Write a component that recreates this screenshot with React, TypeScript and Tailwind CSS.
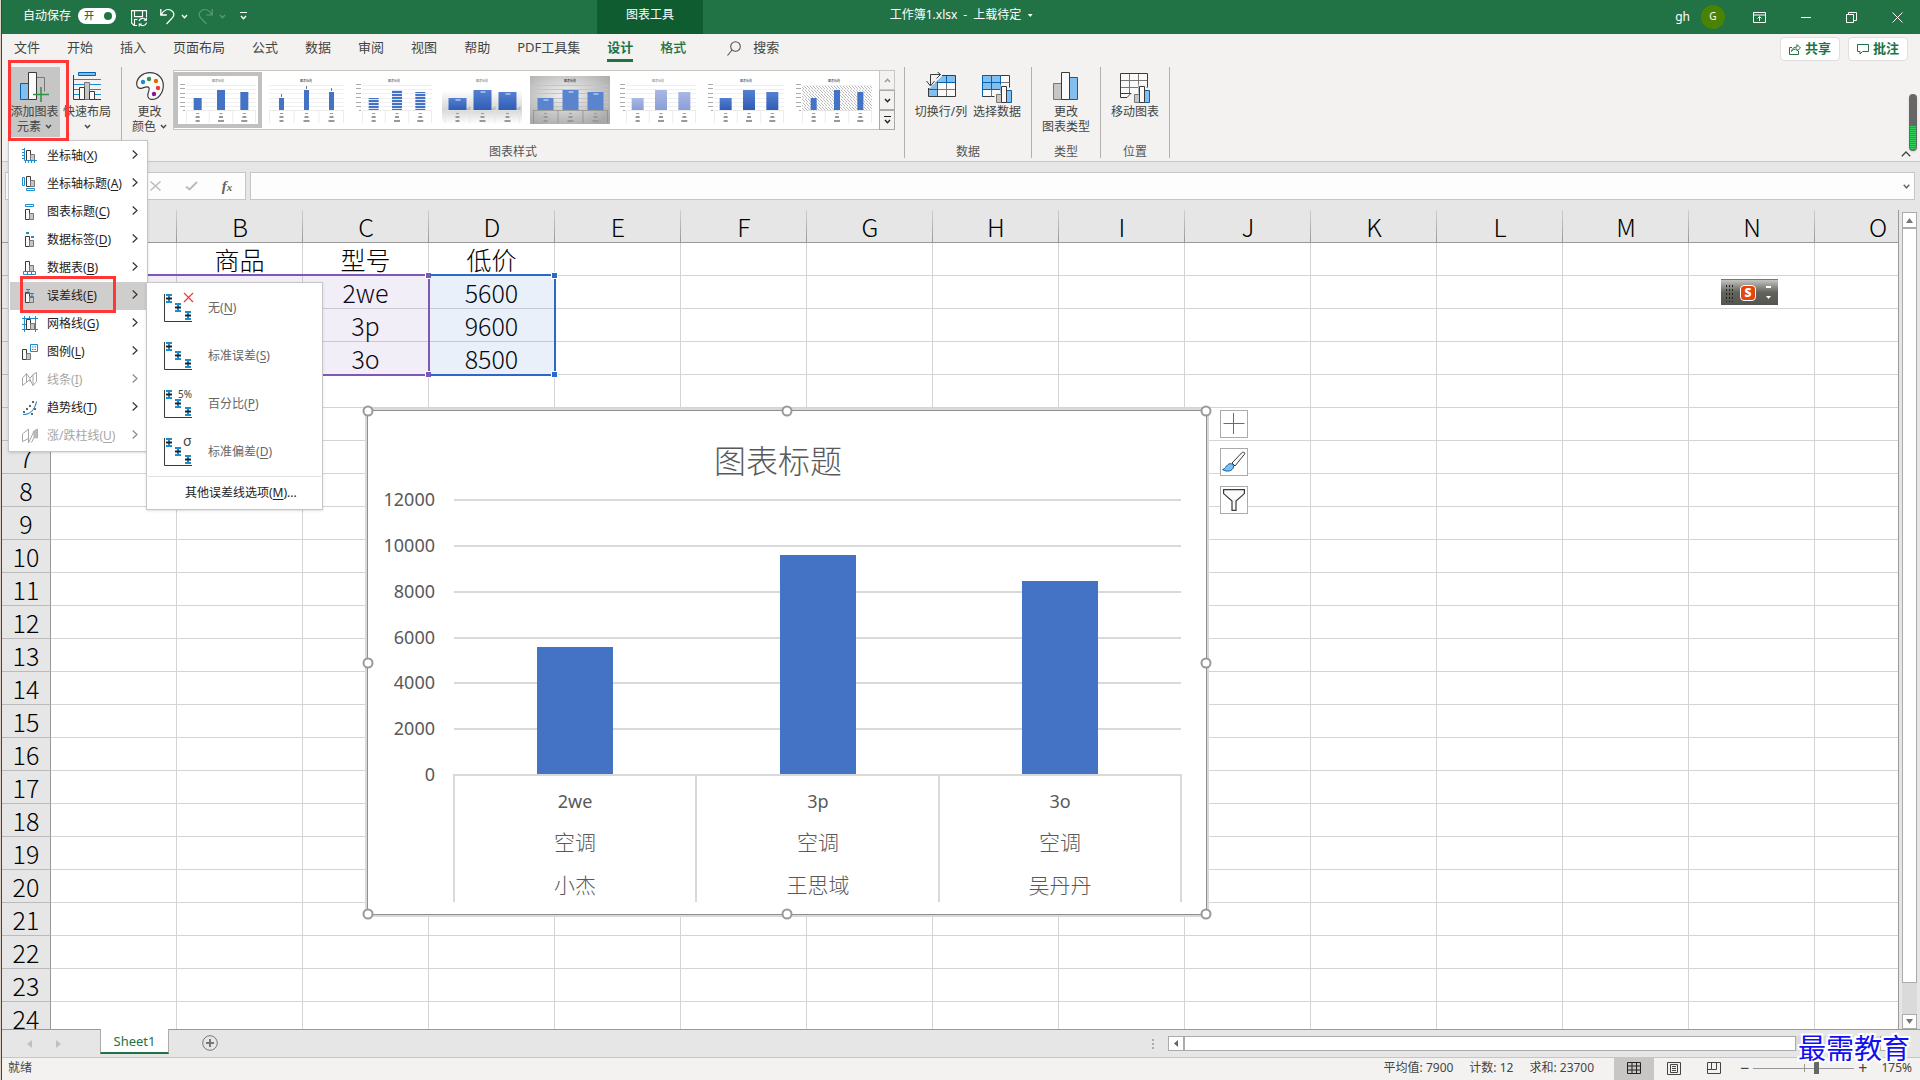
import React from "react";
import clsx from "clsx";

const BLUE = "#4472c4";
const UI = "font-['Noto_Sans','Noto_Sans_CJK_SC',sans-serif]";
const SHEET = "font-['Noto_Sans_CJK_SC',sans-serif]";

const COLS = "ABCDEFGHIJKLMNO".split("");
const ROWS = Array.from({ length: 25 }, (_, i) => i + 1);

const CELLS: Record<string, string> = {
  B1: "商品", C1: "型号", D1: "低价",
  C2: "2we", D2: "5600",
  C3: "3p", D3: "9600",
  C4: "3o", D4: "8500",
};

const TABS = ["文件", "开始", "插入", "页面布局", "公式", "数据", "审阅", "视图", "帮助", "PDF工具集", "设计", "格式"];

const SERIES = [
  { model: "2we", product: "空调", name: "小杰", value: 5600 },
  { model: "3p", product: "空调", name: "王思域", value: 9600 },
  { model: "3o", product: "空调", name: "吴丹丹", value: 8500 },
];

function Caret({ className, up }: { className?: string; up?: boolean }) {
  return (
    <svg width="7" height="5" viewBox="0 0 7 5" className={className} fill="none" stroke="currentColor" strokeWidth="1.4">
      <path d={up ? "M1 4 3.5 1.2 6 4" : "M1 1 3.5 3.8 6 1"} />
    </svg>
  );
}

/* ---------- title bar ---------- */

function TitleBar() {
  return (
    <header className="relative flex h-[34px] shrink-0 items-center justify-between bg-[#217346] text-xs text-white">
      <div className="flex items-center pl-[21px] pb-0.5">
        <label htmlFor="autosave">自动保存</label>
        <button id="autosave" role="switch" aria-checked="true" className="ml-[7px] flex h-4 w-[38px] items-center justify-between rounded-full bg-white px-1 text-[10px] font-medium text-[#217346]">
          <span className="pl-0.5">开</span>
          <span className="h-2 w-2 rounded-full bg-[#217346]" />
        </button>
        <button aria-label="保存" className="ml-[15px] mt-1">
          <svg width="17" height="17" viewBox="0 0 17 17" fill="none" stroke="#fff" strokeWidth="1.1">
            <path d="M6 15.5H3L.6 13V.6h14.9V7M3.5.6v6h8V.6M3.5 15V9.5h3" />
            <path d="M8 11.2a4 4 0 0 1 7-1.4M15.4 7.5v2.6h-2.6M15.6 12.6a4 4 0 0 1-7 1.5M8.2 16.5V14h2.6" />
          </svg>
        </button>
        <button aria-label="撤消" className="ml-3 flex items-center gap-1.5">
          <svg width="15" height="17" viewBox="0 0 15 17" fill="none" stroke="#fff" strokeWidth="1.3">
            <path d="M.8 1v6h6M1 6.8C4 2 8 .6 11 2.3c3.5 2 3.5 5 1.5 7.3L6.5 16" />
          </svg>
          <Caret />
        </button>
        <button aria-label="恢复" className="ml-[10px] flex items-center gap-1.5 text-[#589a75]">
          <svg width="15" height="17" viewBox="0 0 15 17" fill="none" stroke="currentColor" strokeWidth="1.2">
            <path d="M14.2 1v6h-6M14 6.800C11 2 7 .6 4 2.300c-3.500 2-3.500 5-1.500 7.300L8.500 16" />
          </svg>
          <Caret />
        </button>
        <button aria-label="自定义快速访问工具栏" className="ml-[14px] flex flex-col items-center gap-0.5">
          <span className="h-px w-[7px] bg-white" />
          <Caret />
        </button>
      </div>

      <div className="absolute left-[595px] flex h-full w-[106px] items-center justify-center bg-[#0e5c2f] pb-1">图表工具</div>
      <div className="absolute left-1/2 flex -translate-x-1/2 items-center gap-[6px] whitespace-nowrap pb-1">
        <span>工作簿1.xlsx</span>
        <span>-</span>
        <span>上载待定</span>
        <svg width="5" height="3" viewBox="0 0 5 3"><path d="M0 0h5L2.500 3z" fill="#fff" /></svg>
      </div>

      <div className="flex items-center pr-[17px]">
        <span>gh</span>
        <span className="ml-[11px] flex h-6 w-6 items-center justify-center rounded-full bg-[#498205] text-[10px]">G</span>
        <button aria-label="功能区显示选项" className="ml-7">
          <svg width="13" height="11" viewBox="0 0 13 11" fill="none" stroke="#fff"><path d="M.5.5h12v10H.5zM.5 3h12M6.500 9V5M4.500 6.500l2-2 2 2" /></svg>
        </button>
        <button aria-label="最小化" className="ml-[35px]"><svg width="10" height="10" viewBox="0 0 10 10" stroke="#fff"><path d="M0 5.500h10" /></svg></button>
        <button aria-label="还原" className="ml-[35px]">
          <svg width="11" height="11" viewBox="0 0 11 11" fill="none" stroke="#fff"><path d="M.5 2.500h7v8h-7zM2.500 2.500v-2h8v8h-3" /></svg>
        </button>
        <button aria-label="关闭" className="ml-[35px]"><svg width="11" height="11" viewBox="0 0 11 11" stroke="#fff"><path d="M.5.5l10 10M10.500.5l-10 10" /></svg></button>
      </div>
    </header>
  );
}

/* ---------- ribbon ---------- */

function RibbonTabs() {
  return (
    <div className="flex h-7 items-start justify-between pl-3 pr-3 text-[13px] text-[#444]">
      <nav className="flex gap-[27px]">
        {TABS.map((t) => (
          <button
            key={t}
            className={clsx(
              "h-7 whitespace-nowrap border-b-[3px] pt-0.5",
              t === "设计" ? "border-[#217346] font-bold text-[#217346]" : "border-transparent",
              t === "格式" && "font-medium text-[#217346]"
            )}
          >
            {t}
          </button>
        ))}
        <button className="ml-3.5 flex h-7 items-center gap-3">
          <svg width="14" height="15" viewBox="0 0 14 15" fill="none" stroke="#555" strokeWidth="1.1"><circle cx="8.500" cy="5.500" r="4.800" /><path d="M5 9 .5 14.500" /></svg>
          搜索
        </button>
      </nav>
      <div className="mt-[3px] flex gap-2 font-bold text-[#217346]">
        <button className="flex h-6 w-[60px] items-center justify-center gap-1 rounded-sm border border-[#e1dfdd] bg-white">
          <svg width="12" height="12" viewBox="0 0 12 12" fill="none" stroke="#217346"><path d="M3 4.500H.5v7h9V8M2.500 8.500C3 5.500 5 4 8 4V1.500L11.500 5 8 8V6C5.500 6 4 6.500 2.500 8.500z" /></svg>
          共享
        </button>
        <button className="flex h-6 w-[60px] items-center justify-center gap-1 rounded-sm border border-[#e1dfdd] bg-white">
          <svg width="12" height="12" viewBox="0 0 12 12" fill="none" stroke="#217346"><path d="M.5 1.500h11v7h-6L3 11V8.500H.5z" /></svg>
          批注
        </button>
      </div>
    </div>
  );
}

function RibbonButton({ icon, lines, caret, active, className }: { icon: React.ReactNode; lines: string[]; caret?: boolean; active?: boolean; className?: string }) {
  return (
    <button className={clsx("flex flex-col items-center whitespace-nowrap pt-[5px] pb-[3px] text-xs leading-[15px] text-[#444]", active && "bg-[#c6c6c6]", className)}>
      {icon}
      <span className="mt-1">{lines[0]}</span>
      <span className="flex h-[15px] items-center gap-1">
        {lines[1]}
        {caret && <Caret />}
      </span>
    </button>
  );
}

function IconAddElement() {
  return (
    <svg width="30" height="30" viewBox="0 0 30 30" className="-mb-0.5">
      <path d="M.5 11.500h8v16h-8z" fill="#83beec" stroke="#0063b1" />
      <path d="M16.500 5.500h8v14M16.500 27.500v-22" fill="none" stroke="#797774" />
      <path d="M8.500.5h8v27h-8z" fill="#fafafa" stroke="#3a3a38" />
      <path d="M13 22.500h16M21 15v15" stroke="#309048" strokeWidth="1.500" />
    </svg>
  );
}

function IconQuickLayout() {
  return (
    <svg width="28" height="28" viewBox="0 0 28 28">
      <path d="M5.500.5h17v3h-17z" fill="#83beec" stroke="#0063b1" />
      <path d="M1 7.500h27M1 12.500h27M1 17.500h27M1 22.500h27" stroke="#1e8bcd" />
      <path d="M.5 3v24.500H28" fill="none" stroke="#3a3a38" />
      <path d="M11.500 10.500h5v17h-5z" fill="#c8c6c4" stroke="#797774" />
      <path d="M6.500 15.500h5v12h-5zM16.500 19.500h5v8h-5z" fill="#fafafa" stroke="#3a3a38" />
    </svg>
  );
}

function IconPalette() {
  return (
    <svg width="28" height="28" viewBox="0 0 28 28">
      <path d="M14 .7C6 .7.7 6.500.7 12c0 3 2 5 4.800 4.300 3-.9 5.500-2.600 7.300-.8 1.500 1.700-.8 4.500-1 7.500-.2 3 1.800 4.400 4.200 4.400C22 27.400 27.300 21 27.300 13.500 27.300 6 21.500.7 14 .7z" fill="#fafafa" stroke="#3a3a38" strokeWidth="1.200" />
      <circle cx="7" cy="10" r="2.200" fill="#1e8bcd" />
      <circle cx="13" cy="7" r="2.200" fill="#309048" />
      <circle cx="20" cy="9" r="2.200" fill="#e06c00" />
      <circle cx="22" cy="16" r="2.200" fill="#ed3d3b" />
      <circle cx="18" cy="22" r="2.200" fill="#881798" />
    </svg>
  );
}

function MiniBars({ x, y }: { x: number; y: number }) {
  return (
    <g transform={`translate(${x} ${y})`}>
      <path d="M-1.500 7h6V-1.500h7.500v3H18V18H-1.500z" fill="#f3f2f1" />
      <path d="M.5 8.500h5v8h-5z" fill="#c8c6c4" stroke="#797774" />
      <path d="M10.500 4.500h5v12h-5z" fill="#83beec" stroke="#0063b1" />
      <path d="M5.500.5h5v16h-5z" fill="#fafafa" stroke="#3a3a38" />
    </g>
  );
}

function IconSwitch() {
  return (
    <svg width="30" height="28" viewBox="0 0 30 28">
      <path d="M2.500 3.500h27v21h-27z" fill="#fafafa" />
      <path d="M2.500 10.500v14h9v-14h18v-7h-18z" fill="#83beec" />
      <path d="M11.500 3.500v21M20.500 3.500v21M2.500 10.500h27M2.500 17.500h27" stroke="#797774" />
      <path d="M11.500 10.500h18M11.500 10.500v14M20.500 3.500v7M2.500 17.500h9" stroke="#0063b1" />
      <path d="M2.500 3.500h27v21h-27z" fill="none" stroke="#3a3a38" />
      <path d="M0 0h16v4L4 16H0z" fill="#f3f2f1" />
      <path d="M4.500 13.500V2.500h10M10.500-1l4 3.500-4 4M.5 9l4 5 4-5" fill="none" stroke="#3a3a38" />
    </svg>
  );
}

function IconSelectData() {
  return (
    <svg width="30" height="28" viewBox="0 0 30 28" overflow="visible">
      <path d="M.5 3.500h27v21H.5z" fill="#fafafa" stroke="#3a3a38" />
      <path d="M.5 10.500h27M.5 17.500h27M9.500 3.500v21M18.500 3.500v21" stroke="#797774" />
      <path d="M.5 3.500h18v14H.5z" fill="#83beec" />
      <path d="M.5 3.500h18v14H.5zM9.500 3.500v14M.5 10.500h18M.5 17.500v7" fill="none" stroke="#0063b1" />
      <MiniBars x={14} y={14} />
    </svg>
  );
}

function IconChartType() {
  return (
    <svg width="26" height="28" viewBox="0 0 26 28">
      <path d="M.5 11.500h8v16h-8z" fill="#c8c6c4" stroke="#797774" />
      <path d="M16.500 5.500h8v22h-8z" fill="#83beec" stroke="#0063b1" />
      <path d="M8.500.5h8v27h-8z" fill="#fafafa" stroke="#3a3a38" />
    </svg>
  );
}

function IconMoveChart() {
  return (
    <svg width="30" height="28" viewBox="0 0 30 28" overflow="visible">
      <path d="M.5 1.500h27v24H.5z" fill="#fafafa" />
      <path d="M.5 8.500h27M.5 15.500h27M9.500 1.500v20M18.500 1.500v20" stroke="#797774" />
      <path d="M27.500 21V1.500H.5v24H7l4-4H.5" fill="none" stroke="#3a3a38" />
      <path d="M11 22h4v5H7z" fill="#f3f2f1" />
      <MiniBars x={14} y={14} />
    </svg>
  );
}

type ThumbStyle = { fill: string; width: number; axis: boolean; bg?: "shadow" | "dark" | "hatch"; title: string };

const THUMBS: ThumbStyle[] = [
  { fill: BLUE, width: 8, axis: true, title: "#777" },
  { fill: BLUE, width: 5, axis: false, title: "#333" },
  { fill: "url(#stripes)", width: 10, axis: true, title: "#555" },
  { fill: "url(#deep)", width: 18, axis: false, bg: "shadow", title: "#777" },
  { fill: "#5b84cf", width: 16, axis: false, bg: "dark", title: "#222" },
  { fill: "url(#pale)", width: 12, axis: true, title: "#888" },
  { fill: "url(#deep)", width: 12, axis: true, title: "#243f6b" },
  { fill: BLUE, width: 6, axis: true, bg: "hatch", title: "#333" },
];

function Thumb({ t }: { t: ThumbStyle }) {
  const x0 = t.axis ? 8 : 3;
  const step = (78 - x0) / 3;
  const line = t.bg === "dark" ? "#8a8a8a" : "#e4e4e4";
  return (
    <svg width="80" height="48" viewBox="0 0 80 48">
      <rect width="80" height="48" fill={t.bg === "dark" ? "url(#metal)" : t.bg === "shadow" ? "url(#floor)" : "#fff"} />
      {t.bg === "hatch" && <rect x={x0} y="9" width={78 - x0} height="26" fill="url(#hatch)" />}
      {t.bg !== "shadow" && [9, 13, 17, 22, 26, 30].map((y) => <path key={y} d={`M${x0} ${y}.5H78`} stroke={t.bg === "dark" ? "#c4c4c4" : "#f0f0f0"} />)}
      {t.axis && [8, 12, 17, 21, 26, 30, 34].map((y, i) => <rect key={y} x={i === 6 ? 5 : 2} y={y} width={i === 6 ? 2 : 5} height="1" fill="#aaa" />)}
      <text x="40" y="6" fontSize="3" textAnchor="middle" fill={t.title}>图表标题</text>
      <path d={`M${x0} 34.500H78M${x0}.5 35V47M${x0 + step} 35V47M${x0 + step * 2} 35V47M77.500 35V47`} stroke={line} strokeWidth=".7" />
      {[12, 20, 18].map((h, i) => {
        const cx = x0 + step * (i + 0.5);
        return (
          <g key={i}>
            {t.bg === "shadow" && <path d={`M${cx + 9} 34v-1l4-3v4z`} fill="#bbb" />}
            <rect x={cx - t.width / 2} y={34 - h} width={t.width} height={h} fill={t.fill} />
            {(t.bg === "shadow" || t.bg === "dark") && <rect x={cx - 2} y={35.5 - h} width="5" height="1" fill="#e3ebf8" />}
            {!t.axis && !t.bg && <rect x={cx - 0.5} y={30 - h} width="1" height="3" fill="#777" />}
            <rect x={cx - 1.5} y="37" width="3" height="1" fill="#999" />
            <rect x={cx - 2} y="40" width="4" height="2" fill="#999" />
            <rect x={cx - (i ? 3 : 2)} y="44" width={i ? 6 : 4} height="2" fill="#999" />
          </g>
        );
      })}
    </svg>
  );
}

function Gallery() {
  return (
    <div className="flex h-[60px] border border-[#c8c6c4] bg-white">
      <svg width="0" height="0" className="absolute">
        <defs>
          <pattern id="stripes" width="4" height="3" patternUnits="userSpaceOnUse"><rect width="4" height="3" fill="#dbe5f5" /><rect width="4" height="2" fill={BLUE} /></pattern>
          <pattern id="hatch" width="3" height="3" patternUnits="userSpaceOnUse"><path d="M0 0l3 3" stroke="#aaa" strokeWidth=".8" /></pattern>
          <linearGradient id="deep" x2="0" y2="1"><stop stopColor="#5580d0" /><stop offset="1" stopColor="#2f5db5" /></linearGradient>
          <linearGradient id="pale" x2="0" y2="1"><stop stopColor="#aab8e2" /><stop offset="1" stopColor="#8a9fd8" /></linearGradient>
          <linearGradient id="floor" x2="0" y2="1"><stop offset=".3" stopColor="#fff" /><stop offset=".7" stopColor="#d6d6d6" /><stop offset="1" stopColor="#fff" /></linearGradient>
          <radialGradient id="metal" cx=".45" cy=".4" r=".7"><stop stopColor="#f4f4f4" /><stop offset="1" stopColor="#a8a8a8" /></radialGradient>
        </defs>
      </svg>
      <div className="flex w-[705px] overflow-hidden pt-px">
        {THUMBS.map((t, i) => (
          <button key={i} aria-label={`样式 ${i + 1}`} className={clsx("flex h-14 w-[88px] shrink-0 items-center justify-center border-4", i === 0 ? "border-[#c0c0c0]" : "border-transparent")}>
            <Thumb t={t} />
          </button>
        ))}
      </div>
      <div className="-m-px ml-0 flex w-4 flex-col text-[#222]">
        <button aria-label="上一行" className="flex flex-1 items-center justify-center border border-[#c8c6c4] bg-[#f3f2f1] text-[#999]"><Caret up /></button>
        <button aria-label="下一行" className="flex flex-1 items-center justify-center border border-[#aaa] bg-[#f3f2f1]"><Caret /></button>
        <button aria-label="其他" className="flex flex-1 flex-col items-center justify-center gap-0.5 border border-[#aaa] bg-[#f3f2f1]"><span className="h-px w-[7px] bg-[#222]" /><Caret /></button>
      </div>
    </div>
  );
}

function Group({ label, className, children }: { label?: string; className: string; children: React.ReactNode }) {
  return (
    <section className={clsx("mt-[5px] flex h-[91px] shrink-0 flex-col justify-between border-r border-[#b3b0ad]", className)}>
      <div className="flex items-start">{children}</div>
      {label && <span className="text-center text-xs leading-[13px] text-[#555]">{label}</span>}
    </section>
  );
}

function Ribbon() {
  return (
    <div className="relative flex h-[100px] border-b border-[#c8c6c4]">
      <Group className="w-[120px] pl-[7px]">
        <RibbonButton className="w-[51px]" icon={<IconAddElement />} lines={["添加图表", "元素"]} caret active />
        <RibbonButton className="w-[54px]" icon={<IconQuickLayout />} lines={["快速布局", ""]} caret />
      </Group>
      <Group label="图表样式" className="w-[783px] px-1">
        <RibbonButton className="w-[47px]" icon={<IconPalette />} lines={["更改", "颜色"]} caret />
        <div className="mt-[3px]"><Gallery /></div>
      </Group>
      <Group label="数据" className="w-[127px] px-[7px]">
        <RibbonButton className="w-[58px]" icon={<IconSwitch />} lines={["切换行/列", ""]} />
        <RibbonButton className="w-[54px]" icon={<IconSelectData />} lines={["选择数据", ""]} />
      </Group>
      <Group label="类型" className="w-[69px]">
        <RibbonButton className="w-[68px]" icon={<IconChartType />} lines={["更改", "图表类型"]} />
      </Group>
      <Group label="位置" className="w-[69px]">
        <RibbonButton className="w-[68px]" icon={<IconMoveChart />} lines={["移动图表", ""]} />
      </Group>
      <div className="absolute right-[3px] top-8 flex h-[57px] w-2 items-end rounded-full bg-[#666] p-px shadow">
        <div className="h-6 w-full rounded-b-full bg-[repeating-linear-gradient(to_bottom,#2fd15a_0_1px,#4c8a5c_1px_2px)]" />
      </div>
      <button aria-label="折叠功能区" className="absolute bottom-1 right-[9px] text-[#444]">
        <svg width="10" height="6" viewBox="0 0 10 6" fill="none" stroke="currentColor" strokeWidth="1.3"><path d="M.8 5.300 5 1l4.200 4.300" /></svg>
      </button>
    </div>
  );
}

/* ---------- menus ---------- */

const bars = (
  <>
    <path d="M5.500 3.500h4v10h-4z" fill="#fafafa" stroke="#3a3a38" />
    <path d="M9.500 7.500h4v6h-4z" fill="#c8c6c4" stroke="#797774" />
  </>
);

const MENU: { label: string; k: string; off?: boolean; icon: React.ReactNode }[] = [
  { label: "坐标轴", k: "X", icon: <><g transform="translate(-1 -1)">{bars}</g><path d="M2.500 0v12.500H15M0 1.500h2M0 4.500h2M0 7.500h2M0 10.500h2M3.500 13v2M6.500 13v2M9.500 13v2M12.500 13v2" fill="none" stroke="#1e8bcd" /></> },
  { label: "坐标轴标题", k: "A", icon: <><g transform="translate(-1 -3)">{bars}</g><path d="M.5 1.500h2v8h-2zM4.500 12.500h8v2h-8z" fill="none" stroke="#1e8bcd" /></> },
  { label: "图表标题", k: "C", icon: <><g transform="translate(-2 2)">{bars}</g><path d="M3.500.5h8v2h-8z" fill="none" stroke="#1e8bcd" /></> },
  { label: "数据标签", k: "D", icon: <><g transform="translate(-2 1)">{bars}</g><path d="M4 0h3v2H4zM9 4h3v2H9z" fill="#1e8bcd" /></> },
  { label: "数据表", k: "B", icon: <><g transform="translate(-2 -2)">{bars}</g><path d="M1.500 11.500h12v3h-12zM5.500 11.500v3M9.500 11.500v3" fill="none" stroke="#1e8bcd" /></> },
  { label: "误差线", k: "E", icon: <><g transform="translate(-2 1)">{bars}</g><path d="M4 1.500h4M6 1.500v4M4 5.500h4M8 5.500h4M10 5.500v4M8 9.500h4" stroke="#1e8bcd" /></> },
  { label: "网格线", k: "G", icon: <><path d="M0 2.500h16M0 13.500h16M2.500 0v16M7.500 0v4M13.500 0v16M0 8.500h5" stroke="#1e8bcd" /><g transform="translate(-1 0)">{bars}</g></> },
  { label: "图例", k: "L", icon: <><g transform="translate(-5 2)">{bars}</g><path d="M8.500.5h7v7h-7z" fill="#fff" stroke="#1e8bcd" /><path d="M10 3h1.500M12.500 3H14M10 5.500h1.500M12.500 5.500H14" stroke="#1e8bcd" /></> },
  { label: "线条", k: "I", off: true, icon: <path d="M.5 13.500V6l4-4.500 3.500 5 3-4 3.500-2v9l-3.500 4-3-6zM4.500 2v8M8 7v3M11 2.500v11" fill="none" stroke="#a6a6a6" /> },
  { label: "趋势线", k: "T", icon: <><path d="M1 14.500c7 0 12-5 13.500-13" fill="none" stroke="#1e8bcd" strokeWidth="1.200" /><path d="M1 11h2v2H1zM4 8h2v2H4zM7 5h2v2H7zM10 1h2v2h-2zM12 8h2v2h-2zM9 13h2v2H9z" fill="#666" /></> },
  { label: "涨/跌柱线", k: "U", off: true, icon: <><path d="M.5 13.500V6l6-5v9.500zM9.500 14.500l2.500-5" fill="none" stroke="#a6a6a6" /><path d="M6.500 1v14l5.500-12 3.500-2v9l-3.500-.5V3" stroke="#a6a6a6" fill="none" /><path d="M12 3l3.500-2v9l-3.500-.5z" fill="#b8b8b8" /></> },
];

const ERROR_BARS = [
  { label: "无", k: "N", mark: <path d="M20 0l9 9M29 0l-9 9" stroke="#ed3d3b" strokeWidth="1.200" /> },
  { label: "标准误差", k: "S", mark: null },
  { label: "百分比", k: "P", mark: <text x="14" y="9" fontSize="10" fill="#444">5%</text> },
  { label: "标准偏差", k: "D", mark: <text x="19" y="9" fontSize="14" fill="#444">σ</text> },
];

function Menus() {
  return (
    <div className="absolute left-1.5 top-[140px] z-20 text-xs">
      <ul role="menu" className="w-[140px] border border-[#c6c6c6] bg-white py-px shadow-sm">
        {MENU.map((m) => (
          <li key={m.k} className="pl-px">
            <button disabled={m.off} className={clsx("flex h-7 w-full items-center pl-3 pr-[9px]", m.off ? "text-[#a6a6a6]" : "text-[#222]", m.k === "E" && "bg-[#d0cecd]")}>
              <svg width="16" height="16" viewBox="0 0 16 16" className="shrink-0" overflow="visible">{m.icon}</svg>
              <span className="ml-[9px] whitespace-nowrap">{m.label}(<u className="underline-offset-2">{m.k}</u>)</span>
              <svg width="6" height="9" viewBox="0 0 6 9" fill="none" stroke={m.off ? "#888" : "#333"} strokeWidth="1.2" className="mb-1 ml-auto"><path d="M.7.5l4.300 4-4.300 4" /></svg>
            </button>
          </li>
        ))}
      </ul>

      <ul role="menu" className="absolute left-[138px] top-[142px] w-[177px] border border-[#c6c6c6] bg-white pt-px text-[#666] shadow-sm">
        {ERROR_BARS.map((m) => (
          <li key={m.k}>
            <button className="flex h-12 w-full items-center pl-[17px]">
              <svg width="30" height="30" viewBox="0 0 30 30" overflow="visible">
                <path d="M.5 1v27.500H28" fill="none" stroke="#3a3a38" />
                {[[5, 5], [14, 14], [24, 22]].map(([x, y]) => (
                  <g key={x}>
                    <path d={`M${x - 3} ${y - 3}h6M${x - 3} ${y + 4}h6`} stroke="#1e8bcd" strokeWidth="2" />
                    <path d={`M${x} ${y - 3}v7`} stroke="#1e8bcd" strokeWidth="2" />
                    <path d={`M${x - 3} ${y + 0.5}h6`} stroke="#222" strokeWidth="2" />
                  </g>
                ))}
                {m.mark}
              </svg>
              <span className="ml-3.5">{m.label}(<u className="underline-offset-2">{m.k}</u>)</span>
            </button>
          </li>
        ))}
        <li className="mx-px border-t border-[#e1e1e1] text-[#222]">
          <button className="h-8 w-full pl-[37px] text-left">其他误差线选项(<u className="underline-offset-2">M</u>)...</button>
        </li>
      </ul>

      <div className="pointer-events-none absolute left-3 top-[136px] h-[37px] w-24 border-[3px] border-[#ff3737]" />
      <div className="pointer-events-none absolute left-0 top-[-80px] h-[81px] w-[61px] border-[3px] border-[#ff3737]" />
    </div>
  );
}

/* ---------- formula bar ---------- */

function FormulaBar() {
  return (
    <div className="flex h-12 shrink-0 items-start gap-1 py-2.5 pl-[3px] pr-[5px]">
      <div className="flex h-7 w-[241px] border border-[#c6c6c6] bg-[#fdfdfd]">
        <input aria-label="名称框" className="w-[131px] bg-transparent px-2 text-sm outline-none" />
        <button aria-label="取消" className="flex flex-1 items-center justify-center"><svg width="11" height="10" viewBox="0 0 11 10" stroke="#bbb" strokeWidth="1.4"><path d="M.5.5l10 9M10.500.5l-10 9" /></svg></button>
        <button aria-label="输入" className="flex flex-1 items-center justify-center"><svg width="13" height="10" viewBox="0 0 13 10" fill="none" stroke="#bbb" strokeWidth="2"><path d="M1 5.500 4.500 8.500 12 1" /></svg></button>
        <button aria-label="插入函数" className="flex-1 text-center font-['Liberation_Serif',serif] text-[15px] font-bold italic leading-6 text-[#666]">f<span className="text-[11px]">x</span></button>
      </div>
      <div className="flex h-7 flex-1 items-center border border-[#c6c6c6] bg-[#fdfdfd] pr-1">
        <input aria-label="编辑栏" className="flex-1 bg-transparent px-2 text-sm outline-none" />
        <button aria-label="展开编辑栏" className="text-[#666]"><Caret className="scale-110" /></button>
      </div>
    </div>
  );
}

/* ---------- embedded chart ---------- */

function Chart() {
  const left = 87;
  const base = 365;
  const y = (v: number) => base - Math.round((v / 2000) * 45.75);
  return (
    <div className="absolute left-[365px] top-[200px] z-10">
      <div className="relative h-[505px] w-[840px] border border-[#8f8f8f] bg-white outline-2 outline-[#d9d9d9]">
        <svg width="838" height="503" viewBox="1 0 838 503" fill="#595959" className={UI}>
          <text x="411" y="62" fontSize="32" textAnchor="middle" fontWeight="300">图表标题</text>
          {[0, 2000, 4000, 6000, 8000, 10000, 12000].map((v) => (
            <g key={v}>
              <path d={`M${left} ${y(v) - 1}H814`} stroke="#d9d9d9" strokeWidth="2" />
              <text x="68" y={y(v) + 5} fontSize="18" textAnchor="end">{v}</text>
            </g>
          ))}
          {[87, 329, 572, 814].map((x) => (
            <path key={x} d={`M${x} ${base - 2}V491`} stroke="#d9d9d9" strokeWidth="2" />
          ))}
          {SERIES.map((s, i) => {
            const cx = 208 + Math.round(i * 242.5);
            return (
              <g key={s.name} textAnchor="middle">
                <rect x={cx - 38} y={y(s.value) - 1} width="76" height={base - 1 - y(s.value)} fill={BLUE} />
                <text x={cx} y="397" fontSize="18">{s.model}</text>
                <text x={cx} y="439" fontSize="21" fontWeight="300">{s.product}</text>
                <text x={cx} y="482" fontSize="21" fontWeight="300">{s.name}</text>
              </g>
            );
          })}
        </svg>
        {["left-0 top-0", "left-1/2 top-0", "left-full top-0", "left-0 top-1/2", "left-full top-1/2", "left-0 top-full", "left-1/2 top-full", "left-full top-full"].map((p) => (
          <span key={p} className={clsx("absolute h-[11px] w-[11px] -translate-x-1/2 -translate-y-1/2 rounded-full border-2 border-[#999] bg-white", p)} />
        ))}
      </div>
      <div className="absolute left-[853px] top-0 flex flex-col gap-2.5">
        <button aria-label="图表元素" className="flex h-7 w-7 items-center justify-center border border-[#ababab] bg-white">
          <svg width="22" height="22" viewBox="0 0 22 22" stroke="#309048"><path d="M.5 10.500h21M10.500 0v21" /></svg>
        </button>
        <button aria-label="图表样式" className="flex h-7 w-7 items-center justify-center border border-[#ababab] bg-white">
          <svg width="24" height="22" viewBox="0 0 24 22">
            <path d="M10 12 19.500 2c1.500-1.500 4-.8 3 1.200L13 15z" fill="#fafafa" stroke="#3a3a38" />
            <path d="M.5 18.500c3-.5 3-3 5.500-5 2.500-1.800 6-.5 5.500 2.500-.6 4-6.500 5.500-11 2.500z" fill="#83beec" stroke="#0063b1" />
          </svg>
        </button>
        <button aria-label="图表筛选器" className="flex h-7 w-7 items-center justify-center border border-[#ababab] bg-white">
          <svg width="22" height="22" viewBox="0 0 22 22" fill="#fafafa" stroke="#3a3a38" strokeWidth="1.2"><path d="M.6.6h20.800v4L13 12v9.400H9V12L.6 4.600z" /></svg>
        </button>
      </div>
    </div>
  );
}

/* ---------- sheet ---------- */

function Handle({ className }: { className: string }) {
  return <span className={clsx("absolute h-[7px] w-[7px] border border-white", className)} />;
}

function Sheet() {
  return (
    <div className="flex min-h-0 flex-1">
      <div className="relative flex-1 overflow-hidden border-r border-[#999]">
        <table className={clsx("w-[1939px] table-fixed border-separate border-spacing-0 bg-white text-[25px] font-light leading-8 text-black", SHEET)}>
          <colgroup>
            <col className="w-[49px]" />
            {COLS.map((c) => <col key={c} className="w-[126px]" />)}
          </colgroup>
          <thead>
            <tr className="h-[33px]">
              <th className="border-b border-r border-[#999] bg-[#e6e6e6] p-0" />
              {COLS.map((c) => (
                <th key={c} className="border-b border-[#999] bg-[#e6e6e6] bg-[linear-gradient(to_bottom,#d0d0d0,#999)] bg-[length:1px_100%] bg-right bg-no-repeat p-0 font-light">
                  {c}
                </th>
              ))}
            </tr>
          </thead>
          <tbody>
            {ROWS.map((r) => (
              <tr key={r} className="h-[33px]">
                <th className="border-b border-r border-b-[#bbb] border-r-[#999] bg-[#e6e6e6] p-0 font-light">{r}</th>
                {COLS.map((c) => (
                  <td key={c} className="whitespace-nowrap border-b border-r border-[#d4d4d4] p-0 text-center">{CELLS[c + r]}</td>
                ))}
              </tr>
            ))}
          </tbody>
        </table>

        <div className="absolute left-12 top-16 h-[102px] w-[380px] border-2 border-[#8057b6] bg-[#8057b6]/10">
          <Handle className="-right-1 -top-1 bg-[#8057b6]" />
          <Handle className="-bottom-1 -right-1 bg-[#8057b6]" />
        </div>
        <div className="absolute left-[428px] top-16 h-[102px] w-[126px] border-2 border-l-0 border-[#2e68c6] bg-[#2e68c6]/10">
          <Handle className="-right-1 -top-1 bg-[#2e68c6]" />
          <Handle className="-bottom-1 -right-1 bg-[#2e68c6]" />
        </div>

        <Chart />

        <div className="absolute right-[120px] top-[69px] flex h-[26px] w-[57px] items-center justify-between border-t border-[#777] bg-gradient-to-b from-[#c4c4c0] via-[#62625c] via-50% to-[#565650] px-1">
          <span className="h-[18px] w-[9px] bg-[radial-gradient(#222_1px,transparent_1px)] bg-[length:3px_4px]" />
          <span className="flex h-4 w-4 items-center justify-center rounded-sm border border-white bg-[#e8450c] text-xs font-black leading-none text-white">S</span>
          <span className="flex w-3 flex-col items-center gap-2">
            <span className="h-0.5 w-[5px] bg-white" />
            <svg width="5" height="3" viewBox="0 0 5 3"><path d="M0 0h5L2.500 3z" fill="#fff" /></svg>
          </span>
        </div>
      </div>

      <div className="flex w-[21px] flex-col items-center pt-0.5">
        <button aria-label="向上滚动" className="flex h-4 w-[15px] items-center justify-center border border-[#ababab] bg-white"><svg width="7" height="5" viewBox="0 0 7 5"><path d="M0 5 3.500 0 7 5z" fill="#777" /></svg></button>
        <div className="w-[15px] flex-1 bg-[#dadada]">
          <div className="h-[96%] border border-[#ababab] bg-white" />
        </div>
        <button aria-label="向下滚动" className="flex h-[15px] w-[15px] items-center justify-center border border-[#ababab] bg-white"><svg width="7" height="5" viewBox="0 0 7 5"><path d="M0 0h7L3.500 5z" fill="#777" /></svg></button>
      </div>
    </div>
  );
}

function SheetTabs() {
  return (
    <div className="flex h-7 shrink-0 items-start border-t border-[#999]">
      <div className="flex h-7 w-[98px] items-center gap-6 pl-[25px]">
        <svg width="5" height="8" viewBox="0 0 5 8"><path d="M5 0v8L0 4z" fill="#c0c0c0" /></svg>
        <svg width="5" height="8" viewBox="0 0 5 8"><path d="M0 0v8l5-4z" fill="#c0c0c0" /></svg>
      </div>
      <button className="-mt-px h-[25px] w-[69px] border-x border-b-2 border-x-[#ababab] border-b-[#217346] bg-white text-[13px] leading-5 text-[#217346]">Sheet1</button>
      <button aria-label="新工作表" className="ml-[33px] mt-[5px]">
        <svg width="16" height="16" viewBox="0 0 16 16" fill="none" stroke="#777"><circle cx="8" cy="8" r="7.300" /><path d="M8 4v8M4 8h8" strokeWidth="2" /></svg>
      </button>
      <div className="ml-auto flex w-[768px] items-center pt-1.5">
        <span className="flex w-4 flex-col gap-0.5"><i className="h-0.5 w-0.5 bg-[#aaa]" /><i className="h-0.5 w-0.5 bg-[#aaa]" /><i className="h-0.5 w-0.5 bg-[#aaa]" /></span>
        <button aria-label="向左滚动" className="flex h-[15px] w-4 items-center justify-center border border-[#ababab] bg-white"><svg width="4" height="7" viewBox="0 0 4 7"><path d="M4 0v7L0 3.500z" fill="#666" /></svg></button>
        <div className="flex h-[15px] flex-1 bg-[#dadada]"><div className="w-[88%] border border-[#ababab] bg-white" /></div>
        <button aria-label="向右滚动" className="mr-6 flex h-[15px] w-4 items-center justify-center border border-[#ababab] bg-white"><svg width="4" height="7" viewBox="0 0 4 7"><path d="M0 0v7l4-3.500z" fill="#666" /></svg></button>
      </div>
    </div>
  );
}

function StatusBar() {
  return (
    <footer className="flex h-[23px] shrink-0 items-center justify-between border-t border-[#c6c6c6] bg-[#f3f2f1] pl-1.5 pr-2 text-xs text-[#444]">
      <span className="pb-0.5">就绪</span>
      <div className="flex h-full items-center">
        <div className="flex gap-4 pb-0.5 pr-5">
          <span>平均值: 7900</span>
          <span>计数: 12</span>
          <span>求和: 23700</span>
        </div>
        <button aria-label="普通" className="flex h-full w-10 items-center justify-center bg-[#c8c6c4] pb-0.5"><svg width="14" height="12" viewBox="0 0 14 12" fill="none" stroke="#222"><path d="M.5.5h13v11H.5zM5 .5v11M9.500.5v11M.5 4h13M.5 8h13" /></svg></button>
        <button aria-label="页面布局" className="flex h-full w-10 items-center justify-center pb-0.5"><svg width="14" height="13" viewBox="0 0 14 13" fill="none" stroke="#444"><path d="M.5.5h13v12H.5zM3.500 2.500h7v8h-7zM5 4.500h4M5 6.500h4M5 8.500h4" /></svg></button>
        <button aria-label="分页预览" className="flex h-full w-10 items-center justify-center pb-0.5"><svg width="14" height="12" viewBox="0 0 14 12" fill="none" stroke="#444"><path d="M.5.5h13v11H.5zM4.500.5v7h5v-7M.5 7.500h4" /></svg></button>
        <button aria-label="缩小" className="ml-1.5 pb-0.5 text-base leading-none">−</button>
        <div className="relative ml-1 flex w-[101px] items-center pb-0.5">
          <span className="absolute left-1/2 h-2 w-px bg-[#999]" />
          <input
            type="range"
            aria-label="缩放"
            min="0"
            max="100"
            defaultValue="63"
            className="relative h-px w-full appearance-none bg-[#999] [&::-webkit-slider-thumb]:h-3 [&::-webkit-slider-thumb]:w-[5px] [&::-webkit-slider-thumb]:appearance-none [&::-webkit-slider-thumb]:bg-[#666]"
          />
        </div>
        <button aria-label="放大" className="ml-1 pb-0.5 text-base leading-none">+</button>
        <span className="ml-3.5 pb-0.5">175%</span>
      </div>
    </footer>
  );
}

export default function App() {
  return (
    <div className={clsx("flex h-screen overflow-hidden bg-[#e6e6e6]", UI)}>
      <div className="w-0.5 shrink-0 border-r border-[#4b3f38] bg-[#e0d3c8]" />
      <div className="relative flex min-w-0 flex-1 flex-col">
        <TitleBar />
        <div className="shrink-0 bg-[#f3f2f1]">
          <RibbonTabs />
          <Ribbon />
        </div>
        <FormulaBar />
        <Sheet />
        <SheetTabs />
        <StatusBar />
        <Menus />
        <div className="pointer-events-none absolute bottom-3.5 right-2.5 z-20 text-[28px] leading-9 text-[#1010f0] [paint-order:stroke_fill] [-webkit-text-stroke:4px_#fff]">最需教育</div>
      </div>
    </div>
  );
}
